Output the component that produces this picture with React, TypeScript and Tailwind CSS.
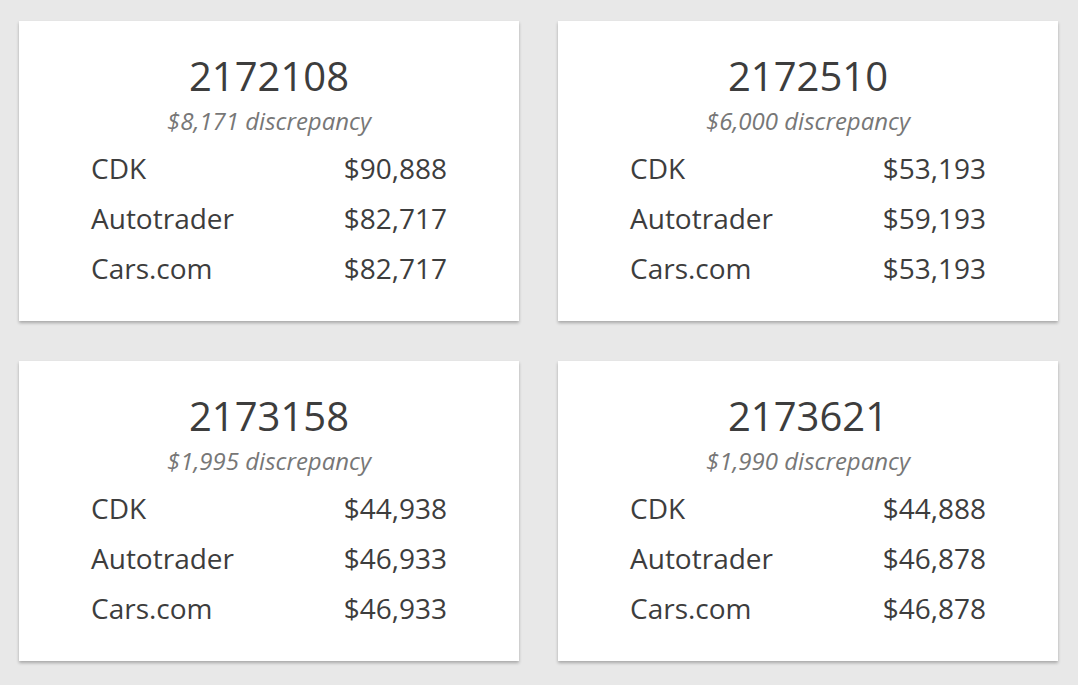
const cards = [
  {
    id: "2172108",
    diff: "$8,171",
    rows: [
      ["CDK", "$90,888"],
      ["Autotrader", "$82,717"],
      ["Cars.com", "$82,717"],
    ],
  },
  {
    id: "2172510",
    diff: "$6,000",
    rows: [
      ["CDK", "$53,193"],
      ["Autotrader", "$59,193"],
      ["Cars.com", "$53,193"],
    ],
  },
  {
    id: "2173158",
    diff: "$1,995",
    rows: [
      ["CDK", "$44,938"],
      ["Autotrader", "$46,933"],
      ["Cars.com", "$46,933"],
    ],
  },
  {
    id: "2173621",
    diff: "$1,990",
    rows: [
      ["CDK", "$44,888"],
      ["Autotrader", "$46,878"],
      ["Cars.com", "$46,878"],
    ],
  },
];

function Card({ id, diff, rows }: { id: string; diff: string; rows: string[][] }) {
  return (
    <div className="h-[300px] bg-white shadow-[0_2px_3px_rgba(0,0,0,0.28)] px-[72px] pt-[31px] text-[#3d3d3d]">
      <div className="text-center text-[40px] leading-[48px]">{id}</div>
      <div className="mt-[6px] text-center text-[24px] leading-[30px] italic text-[#777]">{diff} discrepancy</div>
      <div className="mt-[7px] flex flex-col">
        {rows.map(([k, v]) => (
          <div key={k} className="flex justify-between text-[28px] leading-[50px]">
            <span>{k}</span>
            <span>{v}</span>
          </div>
        ))}
      </div>
    </div>
  );
}

export default function App() {
  return (
    <div className="min-h-screen bg-[#e8e8e8] pt-[21px] pl-[19px] pr-[20px] pb-[24px] font-['Open_Sans',sans-serif]">
      <div className="grid grid-cols-2 gap-x-[39px] gap-y-[40px]">
        {cards.map((c) => (
          <Card key={c.id} {...c} />
        ))}
      </div>
    </div>
  );
}
